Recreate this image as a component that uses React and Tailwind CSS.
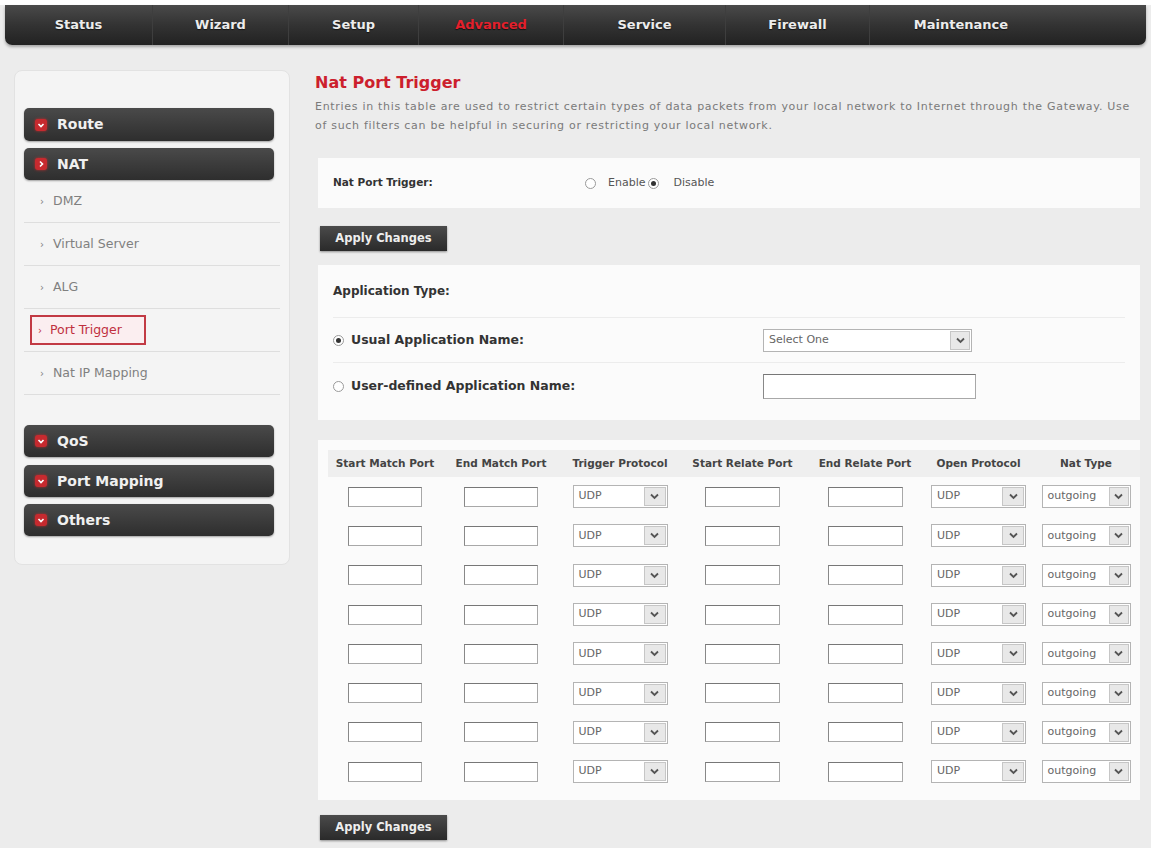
const font = { fontFamily: '"DejaVu Sans", Verdana, sans-serif' };

const tabs = [
  { label: "Status", w: "w-[148px]" },
  { label: "Wizard", w: "w-[136px]" },
  { label: "Setup", w: "w-[130px]" },
  { label: "Advanced", w: "w-[145px]", active: true },
  { label: "Service", w: "w-[162px]" },
  { label: "Firewall", w: "w-[144px]" },
  { label: "Maintenance", w: "w-[182px]" },
];

function Chevron({ right }) {
  return (
    <span className="flex h-[12px] w-[12px] items-center justify-center rounded-[3px] bg-[#c62a2f] shadow-[0_0_3px_rgba(220,40,40,0.8)]">
      <svg width="8" height="8" viewBox="0 0 8 8">
        {right ? (
          <path d="M3 1.5 L5.5 4 L3 6.5" stroke="#fff" strokeWidth="1.6" fill="none" />
        ) : (
          <path d="M1.5 3 L4 5.5 L6.5 3" stroke="#fff" strokeWidth="1.6" fill="none" />
        )}
      </svg>
    </span>
  );
}

function MenuHead({ label, right, h = "h-[32px]", className = "" }) {
  return (
    <div
      className={`${h} ${className} flex w-[250px] items-center gap-[10px] rounded-[5px] bg-gradient-to-b from-[#4a4a4a] to-[#2e2e2e] pl-[11px] shadow-[0_1px_2px_rgba(0,0,0,0.35)]`}
    >
      <Chevron right={right} />
      <span className="text-[14px] font-bold text-[#f0f0f0]">{label}</span>
    </div>
  );
}

function SubItem({ label, active }) {
  return (
    <div className="flex h-[43px] w-[256px] items-center border-b border-[#dedede] pl-[6px]">
      {active ? (
        <div className="flex h-[30px] items-center gap-[8px] border-2 border-[#c23a44] bg-[#fbeef0] pl-[6px] pr-[22px] text-[12.5px] text-[#c0303e]">
          <span className="text-[10px]">›</span>
          <span>{label}</span>
        </div>
      ) : (
        <div className="flex items-center gap-[9px] pl-[10px] text-[12.5px] text-[#808080]">
          <span className="text-[10px]">›</span>
          <span>{label}</span>
        </div>
      )}
    </div>
  );
}

function Radio({ checked }) {
  return (
    <span className="flex h-[11px] w-[11px] items-center justify-center rounded-full border border-[#9a9a9a] bg-white">
      {checked ? <span className="h-[5px] w-[5px] rounded-full bg-[#333]" /> : null}
    </span>
  );
}

function Button() {
  return (
    <div className="flex h-[25px] w-[127px] items-center justify-center bg-gradient-to-b from-[#4b4b4b] to-[#2a2a2a] text-[11.5px] font-bold text-[#eee] shadow-[0_1px_2px_rgba(0,0,0,0.4)]">
      Apply Changes
    </div>
  );
}

function Select({ value, w, arrow = "w-[18px]" }) {
  return (
    <div className={`${w} flex h-[23px] items-stretch border border-[#b4b4b4] bg-white font-normal`}>
      <span className="flex flex-1 items-center pl-[5px] text-[11px] text-[#666]">{value}</span>
      <span className={`${arrow} m-[1px] flex items-center justify-center border border-[#c6c6c6] bg-[#e8e8e8]`}>
        <svg width="9" height="7" viewBox="0 0 9 7">
          <path d="M1 1.5 L4.5 5 L8 1.5" stroke="#555" strokeWidth="1.8" fill="none" />
        </svg>
      </span>
    </div>
  );
}

function TextBox({ w = "w-[74px]", h = "h-[20px]" }) {
  return <div className={`${w} ${h} border border-[#a8a8a8] border-t-[#777] border-l-[#888] bg-white`} />;
}

const heads = [
  "Start Match Port",
  "End Match Port",
  "Trigger Protocol",
  "Start Relate Port",
  "End Relate Port",
  "Open Protocol",
  "Nat Type",
];

export default function App() {
  const rows = [0, 1, 2, 3, 4, 5, 6, 7];
  return (
    <div style={font} className="h-[848px] w-[1151px] overflow-hidden bg-[#ececec]">
      <div className="h-[5px] bg-white" />
      <div className="mx-[5px] flex h-[40px] rounded-b-[7px] bg-gradient-to-b from-[#4a4a4a] via-[#333] to-[#222] shadow-[0_2px_3px_rgba(0,0,0,0.3)]">
        {tabs.map((t, i) => (
          <div
            key={t.label}
            className={`${t.w} flex items-center justify-center text-[13px] font-bold [text-shadow:0_1px_1px_rgba(0,0,0,0.6)] ${
              i < tabs.length - 1 ? "border-r border-[#3e3e3e]" : ""
            } ${t.active ? "text-[#e3202c]" : "text-[#ececec]"}`}
          >
            {t.label}
          </div>
        ))}
      </div>

      <div className="flex">
        <div className="ml-[14px] mt-[25px] h-[495px] w-[276px] rounded-[8px] border border-[#e2e2e2] bg-[#f4f4f4] pl-[9px] pt-[37px]">
          <MenuHead label="Route" h="h-[33px]" />
          <MenuHead label="NAT" right className="mt-[7px]" />
          <SubItem label="DMZ" />
          <SubItem label="Virtual Server" />
          <SubItem label="ALG" />
          <SubItem label="Port Trigger" active />
          <SubItem label="Nat IP Mapping" />
          <MenuHead label="QoS" className="mt-[30px]" />
          <MenuHead label="Port Mapping" className="mt-[8px]" />
          <MenuHead label="Others" className="mt-[7px]" />
        </div>

        <div className="ml-[20px] w-[835px] pt-[28px]">
          <div className="pl-[5px]">
            <div className="text-[16px] font-bold leading-[20px] text-[#cc1f2d]">Nat Port Trigger</div>
            <div className="mt-[4px] text-[11px] leading-[19px] tracking-[0.7px] text-[#7a7a7a]">
              Entries in this table are used to restrict certain types of data packets from your local network to Internet through the Gateway. Use
              <br />
              of such filters can be helpful in securing or restricting your local network.
            </div>
          </div>

          <div className="ml-[8px] mt-[23px] flex h-[50px] w-[822px] items-center bg-[#fbfbfb] pl-[15px] text-[11px]">
            <span className="w-[252px] text-[10.5px] font-bold text-[#333]">Nat Port Trigger:</span>
            <Radio />
            <span className="ml-[12px] text-[#555]">Enable</span>
            <span className="ml-[3px]">
              <Radio checked />
            </span>
            <span className="ml-[14px] text-[#555]">Disable</span>
          </div>

          <div className="ml-[10px] mt-[18px]">
            <Button />
          </div>

          <div className="ml-[8px] mt-[14px] h-[155px] w-[822px] bg-[#fbfbfb] px-[15px] text-[12px] font-bold text-[#333]">
            <div className="flex h-[53px] items-center border-b border-[#ececec]">Application Type:</div>
            <div className="flex h-[45px] items-center border-b border-[#ececec] text-[12.5px]">
              <Radio checked />
              <span className="ml-[7px] w-[412px]">Usual Application Name:</span>
              <Select value="Select One" w="w-[209px]" arrow="w-[20px]" />
            </div>
            <div className="flex h-[46px] items-center text-[12.5px]">
              <Radio />
              <span className="ml-[7px] w-[412px]">User-defined Application Name:</span>
              <TextBox w="w-[213px]" h="h-[25px]" />
            </div>
          </div>

          <div className="ml-[8px] mt-[20px] h-[360px] w-[822px] bg-[#fbfbfb] pl-[10px] pt-[10px]">
            <div className="grid grid-cols-[114px_118px_120px_125px_120px_107px_108px]">
              {heads.map((h) => (
                <div
                  key={h}
                  className="flex h-[27px] items-center justify-center bg-[#efefef] text-[10.5px] font-bold text-[#444]"
                >
                  {h}
                </div>
              ))}
              {rows.map((r) => [
                <div key={`a${r}`} className="flex h-[39.3px] items-center justify-center">
                  <TextBox />
                </div>,
                <div key={`b${r}`} className="flex h-[39.3px] items-center justify-center">
                  <TextBox />
                </div>,
                <div key={`c${r}`} className="flex h-[39.3px] items-center justify-center">
                  <Select value="UDP" w="w-[95px]" arrow="w-[22px]" />
                </div>,
                <div key={`d${r}`} className="flex h-[39.3px] items-center justify-center">
                  <TextBox w="w-[75px]" />
                </div>,
                <div key={`e${r}`} className="flex h-[39.3px] items-center justify-center">
                  <TextBox w="w-[75px]" />
                </div>,
                <div key={`f${r}`} className="flex h-[39.3px] items-center justify-center">
                  <Select value="UDP" w="w-[95px]" arrow="w-[22px]" />
                </div>,
                <div key={`g${r}`} className="flex h-[39.3px] items-center justify-center">
                  <Select value="outgoing" w="w-[89px]" arrow="w-[20px]" />
                </div>,
              ])}
            </div>
          </div>

          <div className="ml-[10px] mt-[15px]">
            <Button />
          </div>
        </div>
      </div>
    </div>
  );
}
